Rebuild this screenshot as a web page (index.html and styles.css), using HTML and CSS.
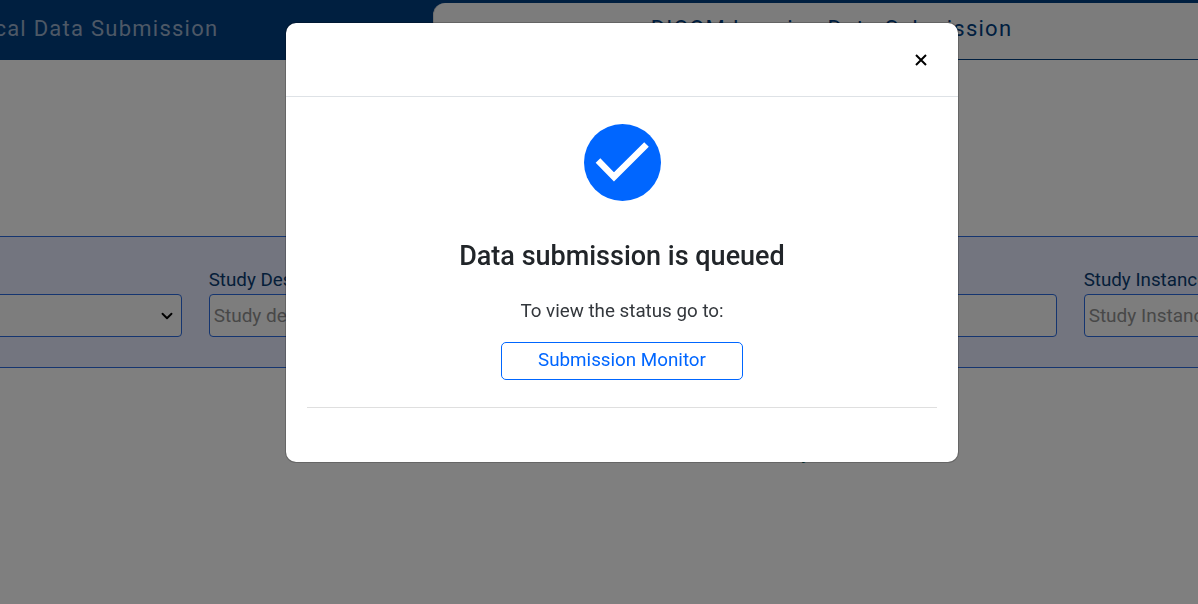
FILE: index.html
```html
<!DOCTYPE html>
<html>
<head>
    <meta charset="UTF-8">
    <title>Data Submission</title>
    <link rel="stylesheet" href="styles.css">
</head>
<body>
    <div class="page">
        <!-- Tabs -->
        <div class="tabs">
            <div class="tab tab-active">Clinical Data Submission</div>
            <div class="tab tab-other">DICOM Imaging Data Submission</div>
        </div>

        <!-- Filters -->
        <div class="filters">
            <div class="field">
                <label for="modality">Modality</label>
                <select id="modality" class="form-select">
                    <option></option>
                </select>
            </div>
            <div class="field">
                <label for="study-description">Study Description</label>
                <input type="text" id="study-description" placeholder="Study description">
            </div>
            <div class="field">
                <label for="study-date">Study Date</label>
                <input type="text" id="study-date">
            </div>
            <div class="field">
                <label for="accession">Accession Number</label>
                <input type="text" id="accession">
            </div>
            <div class="field">
                <label for="study-instance">Study Instance UID</label>
                <input type="text" id="study-instance" placeholder="Study Instance UID">
            </div>
        </div>
        <div class="filters-gap"></div>

        <p class="empty-text">Select filters above to see all studies today</p>
    </div>

    <!-- Modal -->
    <div class="backdrop">
        <div class="modal">
            <div class="modal-header">
                <button class="close-button" type="button" aria-label="Close">
                    <svg width="12" height="12" viewBox="0 0 12 12">
                        <path d="M1 1L11 11M11 1L1 11" stroke="#000" stroke-width="2" fill="none"/>
                    </svg>
                </button>
            </div>
            <div class="modal-body">
                <svg class="check-icon" width="77" height="77" viewBox="0 0 77 77">
                    <circle cx="38.5" cy="38.5" r="38.5" fill="#0066ff"/>
                    <path d="M14 36.5L30 52.9L62.5 20.5" stroke="#fff" stroke-width="6.5" fill="none"/>
                </svg>
                <h2 class="modal-title">Data submission is queued</h2>
                <p class="modal-text">To view the status go to:</p>
                <a class="monitor-button" href="#">Submission Monitor</a>
                <hr class="modal-rule">
            </div>
        </div>
    </div>
</body>
</html>
```

FILE: styles.css
```css
body {
    font-family: Roboto, Arial, sans-serif;
    background-color: #fff;
    margin: 0;
    padding: 0;
    overflow: hidden;
    height: 604px;
}

.page {
    width: 1600px;
    margin-left: -363px;
}

.tabs {
    display: flex;
    background-color: #003e80;
    padding-top: 3px;
}

.tab {
    width: 796px;
    height: 57px;
    box-sizing: border-box;
    display: flex;
    align-items: center;
    justify-content: center;
    padding-bottom: 6px;
    font-size: 22px;
    letter-spacing: 1.25px;
}

.tab-active {
    color: #9ab0cc;
    padding-left: 94px;
}

.tab-other {
    background-color: #f9f9f9;
    color: #003e80;
    border-bottom: 1px solid #003e80;
    border-left: 1px solid #ddd;
    border-top-left-radius: 12px;
}

.filters {
    display: flex;
    gap: 27px;
    margin-top: 176px;
    height: 130px;
    padding: 0 0 0 280px;
    align-items: flex-start;
    background-color: #e6ebff;
    border-top: 1px solid #2a6ae0;
    border-bottom: 1px solid #2a6ae0;
}

.field {
    width: 264.67px;
    padding-top: 29px;
    flex-shrink: 0;
}

.field label {
    display: block;
    font-size: 18.8px;
    line-height: 28px;
    color: #0a3d72;
    white-space: nowrap;
}

.field input,
.form-select {
    display: block;
    width: 100%;
    height: 43px;
    box-sizing: border-box;
    padding: 0 4px;
    font-family: inherit;
    font-size: 19px;
    background-color: #fbfbfb;
    border: 1px solid #2a6ae0;
    border-radius: 4px;
}

.field input::placeholder {
    color: #909090;
    opacity: 1;
}

.form-select {
    appearance: none;
    background-image: url("data:image/svg+xml,%3csvg xmlns='http://www.w3.org/2000/svg' viewBox='0 0 16 16'%3e%3cpath fill='none' stroke='%23000' stroke-linecap='round' stroke-linejoin='round' stroke-width='2.5' d='M2 5l6 6 6-6'/%3e%3c/svg%3e");
    background-repeat: no-repeat;
    background-position: right 7px center;
    background-size: 14px 12px;
}

.filters-gap {
    height: 13px;
    background-color: #fefefe;
}

.empty-text {
    width: 1198px;
    margin: 60px 0 0 363px;
    padding-left: 32px;
    text-align: center;
    font-size: 19px;
    color: #0b6b6b;
}

.backdrop {
    position: fixed;
    top: 0;
    left: 0;
    right: 0;
    bottom: 0;
    background-color: rgba(0, 0, 0, 0.5);
    padding: 22px 0 0 285px;
}

.modal {
    width: 674px;
    height: 441px;
    box-sizing: border-box;
    background-color: #fff;
    background-clip: padding-box;
    border: 1px solid rgba(0, 0, 0, 0.2);
    border-radius: 11px;
    overflow: hidden;
}

.modal-header {
    height: 74px;
    box-sizing: border-box;
    border-bottom: 1px solid #dee2e6;
    display: flex;
    justify-content: flex-end;
    align-items: center;
    padding: 0 30px 0 0;
}

.close-button {
    background: none;
    border: none;
    padding: 0;
    width: 14px;
    height: 14px;
    display: flex;
    align-items: center;
    justify-content: center;
}

.modal-body {
    display: flex;
    flex-direction: column;
    align-items: center;
    padding: 27px 21px 0;
}

.check-icon {
    display: block;
}

.modal-title {
    margin: 37px 0 0;
    font-size: 27px;
    line-height: 36px;
    font-weight: 500;
    color: #212529;
}

.modal-text {
    margin: 24px 0 0;
    font-size: 18.8px;
    line-height: 27px;
    color: #33373c;
}

.monitor-button {
    display: block;
    box-sizing: border-box;
    width: 242px;
    height: 38px;
    margin-top: 17px;
    border: 1px solid #0066ff;
    border-radius: 5px;
    color: #0066ff;
    text-align: center;
    text-decoration: none;
    font-size: 18.8px;
    line-height: 34px;
}

.modal-rule {
    width: 100%;
    margin: 27px 0 0;
    border: none;
    border-top: 1px solid #dfdfdf;
}
```
